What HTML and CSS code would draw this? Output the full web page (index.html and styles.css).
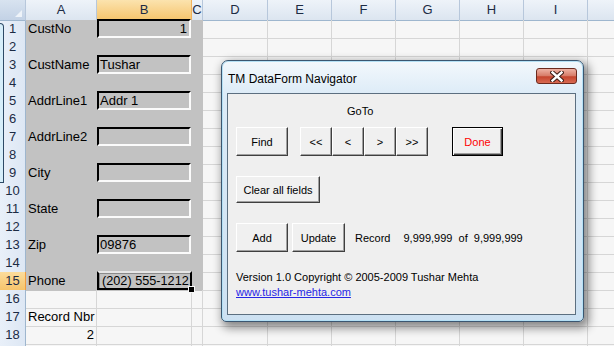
FILE: index.html
```html
<!DOCTYPE html>
<html lang="en">
<head>
    <meta charset="UTF-8">
    <title>TM DataForm Navigator</title>
    <link rel="stylesheet" href="styles.css">
</head>
<body>
    <div class="sheet">
        <div class="row head">
            <div class="corner"></div><div>A</div><div class="on">B</div><div>C</div><div>D</div><div>E</div><div>F</div><div>G</div><div>H</div><div>I</div><div></div>
        </div>
        <div class="row shade">
            <div class="rh">1</div><div class="c">CustNo</div><div class="c"><span class="box num">1</span></div><div class="c"></div>
            <div class="c"></div><div class="c"></div><div class="c"></div><div class="c"></div><div class="c"></div><div class="c"></div><div class="c"></div>
        </div>
        <div class="row shade">
            <div class="rh">2</div><div class="c"></div><div class="c"></div><div class="c"></div>
            <div class="c"></div><div class="c"></div><div class="c"></div><div class="c"></div><div class="c"></div><div class="c"></div><div class="c"></div>
        </div>
        <div class="row shade">
            <div class="rh">3</div><div class="c">CustName</div><div class="c"><span class="box">Tushar</span></div><div class="c"></div>
            <div class="c"></div><div class="c"></div><div class="c"></div><div class="c"></div><div class="c"></div><div class="c"></div><div class="c"></div>
        </div>
        <div class="row shade">
            <div class="rh">4</div><div class="c"></div><div class="c"></div><div class="c"></div>
            <div class="c"></div><div class="c"></div><div class="c"></div><div class="c"></div><div class="c"></div><div class="c"></div><div class="c"></div>
        </div>
        <div class="row shade">
            <div class="rh">5</div><div class="c">AddrLine1</div><div class="c"><span class="box">Addr 1</span></div><div class="c"></div>
            <div class="c"></div><div class="c"></div><div class="c"></div><div class="c"></div><div class="c"></div><div class="c"></div><div class="c"></div>
        </div>
        <div class="row shade">
            <div class="rh">6</div><div class="c"></div><div class="c"></div><div class="c"></div>
            <div class="c"></div><div class="c"></div><div class="c"></div><div class="c"></div><div class="c"></div><div class="c"></div><div class="c"></div>
        </div>
        <div class="row shade">
            <div class="rh">7</div><div class="c">AddrLine2</div><div class="c"><span class="box"></span></div><div class="c"></div>
            <div class="c"></div><div class="c"></div><div class="c"></div><div class="c"></div><div class="c"></div><div class="c"></div><div class="c"></div>
        </div>
        <div class="row shade">
            <div class="rh">8</div><div class="c"></div><div class="c"></div><div class="c"></div>
            <div class="c"></div><div class="c"></div><div class="c"></div><div class="c"></div><div class="c"></div><div class="c"></div><div class="c"></div>
        </div>
        <div class="row shade">
            <div class="rh">9</div><div class="c">City</div><div class="c"><span class="box"></span></div><div class="c"></div>
            <div class="c"></div><div class="c"></div><div class="c"></div><div class="c"></div><div class="c"></div><div class="c"></div><div class="c"></div>
        </div>
        <div class="row shade">
            <div class="rh">10</div><div class="c"></div><div class="c"></div><div class="c"></div>
            <div class="c"></div><div class="c"></div><div class="c"></div><div class="c"></div><div class="c"></div><div class="c"></div><div class="c"></div>
        </div>
        <div class="row shade">
            <div class="rh">11</div><div class="c">State</div><div class="c"><span class="box"></span></div><div class="c"></div>
            <div class="c"></div><div class="c"></div><div class="c"></div><div class="c"></div><div class="c"></div><div class="c"></div><div class="c"></div>
        </div>
        <div class="row shade">
            <div class="rh">12</div><div class="c"></div><div class="c"></div><div class="c"></div>
            <div class="c"></div><div class="c"></div><div class="c"></div><div class="c"></div><div class="c"></div><div class="c"></div><div class="c"></div>
        </div>
        <div class="row shade">
            <div class="rh">13</div><div class="c">Zip</div><div class="c"><span class="box">09876</span></div><div class="c"></div>
            <div class="c"></div><div class="c"></div><div class="c"></div><div class="c"></div><div class="c"></div><div class="c"></div><div class="c"></div>
        </div>
        <div class="row shade">
            <div class="rh">14</div><div class="c"></div><div class="c"></div><div class="c"></div>
            <div class="c"></div><div class="c"></div><div class="c"></div><div class="c"></div><div class="c"></div><div class="c"></div><div class="c"></div>
        </div>
        <div class="row shade">
            <div class="rh on">15</div><div class="c">Phone</div><div class="c active"><span class="box sel">(202) 555-1212</span><span class="handle"></span></div><div class="c"></div>
            <div class="c"></div><div class="c"></div><div class="c"></div><div class="c"></div><div class="c"></div><div class="c"></div><div class="c"></div>
        </div>
        <div class="row">
            <div class="rh">16</div><div class="c"></div><div class="c"></div><div class="c"></div>
            <div class="c"></div><div class="c"></div><div class="c"></div><div class="c"></div><div class="c"></div><div class="c"></div><div class="c"></div>
        </div>
        <div class="row">
            <div class="rh">17</div><div class="c">Record Nbr</div><div class="c"></div><div class="c"></div>
            <div class="c"></div><div class="c"></div><div class="c"></div><div class="c"></div><div class="c"></div><div class="c"></div><div class="c"></div>
        </div>
        <div class="row">
            <div class="rh">18</div><div class="c num">2</div><div class="c"></div><div class="c"></div>
            <div class="c"></div><div class="c"></div><div class="c"></div><div class="c"></div><div class="c"></div><div class="c"></div><div class="c"></div>
        </div>
        <div class="row">
            <div class="rh"></div><div class="c"></div><div class="c"></div><div class="c"></div>
            <div class="c"></div><div class="c"></div><div class="c"></div><div class="c"></div><div class="c"></div><div class="c"></div><div class="c"></div>
        </div>
    </div>

    <!-- borde de la otra ventana detras -->
    <div class="edge"></div>

    <div class="dialog">
        <div class="titlebar">
            <span class="title">TM DataForm Navigator</span>
            <span class="close">
                <svg width="14" height="11" viewBox="0 0 14 11">
                    <path d="M2.5 1.5 L11.5 9.5 M11.5 1.5 L2.5 9.5" stroke="#3a1a14" stroke-width="4.4" stroke-linecap="square"/>
                    <path d="M2.5 1.5 L11.5 9.5 M11.5 1.5 L2.5 9.5" stroke="#ffffff" stroke-width="2.4" stroke-linecap="square"/>
                </svg>
            </span>
        </div>
        <div class="client">
            <div class="goto">GoTo</div>
            <div class="line first">
                <button class="btn find">Find</button>
                <div class="nav">
                    <button class="btn">&lt;&lt;</button>
                    <button class="btn">&lt;</button>
                    <button class="btn">&gt;</button>
                    <button class="btn">&gt;&gt;</button>
                </div>
                <button class="btn done">Done</button>
            </div>
            <div class="line">
                <button class="btn clear">Clear all fields</button>
            </div>
            <div class="line">
                <button class="btn add">Add</button>
                <button class="btn update">Update</button>
                <span class="record">Record</span>
                <span class="count">9,999,999  of  9,999,999</span>
            </div>
            <p class="version">Version 1.0 Copyright © 2005-2009 Tushar Mehta</p>
            <a class="link" href="#">www.tushar-mehta.com</a>
        </div>
    </div>
</body>
</html>
```

FILE: styles.css
```css
body {
    margin: 0;
    overflow: hidden;
    background-color: #f6f6f6;
    font-family: "Liberation Sans", Arial, sans-serif;
}

/* hoja de calculo */
.sheet {
    width: 652px;
    font-size: 13px;
    color: #000000;
}
.row {
    display: grid;
    grid-template-columns: 26px 71px 95px 11px 65px 64px 64px 64px 64px 64px 64px;
    height: 18px;
}
.row > div {
    box-sizing: border-box;
    border-right: 1px solid #d6d6d6;
    border-bottom: 1px solid #d6d6d6;
    line-height: 18px;
    white-space: nowrap;
}
.c {
    padding: 0 2px;
}
.num {
    text-align: right;
}
.shade .c:nth-child(-n+4) {
    background-color: #c2c2c2;
    border-color: #c2c2c2;
}

.head {
    height: 20px;
}
.head > div {
    background: linear-gradient(#eef3f9, #dce5f0);
    border-right: 1px solid #b7c7db;
    border-bottom: 1px solid #9eb6ce;
    text-align: center;
    line-height: 20px;
    color: #1c2b44;
}
.head > div.on {
    background: linear-gradient(#fbe3ae, #f6c46c);
    border-bottom-color: #f29b3c;
    border-right-color: #f2b25c;
}
.head > div.corner {
    position: relative;
    background: linear-gradient(#d8e3f0, #c3d2e6);
}
.corner::after {
    content: "";
    position: absolute;
    right: 3px;
    bottom: 3px;
    border-left: 7px solid transparent;
    border-bottom: 7px solid #eef3f9;
}
.row > div.rh {
    background: linear-gradient(90deg, #e9f0f9, #dde7f4);
    border-right: 1px solid #9eb6ce;
    border-bottom: 1px solid #b3c6dc;
    text-align: center;
    color: #1c2b44;
}
.row > div.rh.on {
    background: linear-gradient(#fbdc9c, #f6c46c);
    border-right-color: #f29b3c;
    border-bottom-color: #f29b3c;
}

/* cajas de texto en la columna B */
.box {
    display: block;
    box-sizing: border-box;
    height: 19px;
    margin: -1px -2px 0;
    border: 2px solid;
    border-color: #000000 #fbfbfb #fbfbfb #000000;
    padding: 0 2px 0 1px;
    line-height: 16px;
}
.active {
    position: relative;
}
.box.sel {
    margin-right: -3px;
    border-color: #e6e6e6 #000000 #000000 #000000;
    box-shadow: inset 1px 1px #8a8a8a;
    padding-left: 3px;
    line-height: 16px;
    font-size: 12.7px;
}
.handle {
    position: absolute;
    right: -4px;
    bottom: -3px;
    width: 5px;
    height: 5px;
    background-color: #000000;
    border: 1px solid #f6f6f6;
}

.edge {
    position: absolute;
    left: 0;
    top: 23px;
    width: 3px;
    height: 158px;
    background-color: #d6eefa;
    border: 1px solid #2d4a66;
    border-left: none;
    border-radius: 0 4px 0 0;
}

/* ventana del formulario */
.dialog {
    position: absolute;
    left: 221px;
    top: 60px;
    width: 363px;
    height: 262px;
    box-sizing: border-box;
    border: 1px solid #3b5670;
    border-radius: 7px 7px 5px 5px;
    background: linear-gradient(#f3f8fc, #dcebf7 34px, #cde1f2);
    box-shadow: 3px 4px 10px 2px rgba(0, 0, 0, 0.45), inset 0 0 0 1px #b4e0f5;
    padding: 0 7px 6px 5px;
    display: flex;
    flex-direction: column;
    font-family: "Liberation Sans", Arial, sans-serif;
}
.titlebar {
    height: 32px;
    display: flex;
    justify-content: space-between;
    align-items: flex-start;
}
.title {
    margin-top: 11px;
    margin-left: 1px;
    font-size: 12px;
    line-height: 15px;
    color: #000000;
}
.close {
    margin-top: 7px;
    margin-right: -1px;
    width: 41px;
    height: 16px;
    box-sizing: border-box;
    border: 1px solid #6b2a1e;
    border-radius: 3px;
    background: linear-gradient(#eeb2a4, #d67a66 50%, #c5442d 55%, #d86a52);
    display: flex;
    align-items: center;
    justify-content: center;
}
.client {
    flex: 1;
    border: 1px solid #5c6f80;
    background-color: #efefef;
    padding: 10px 9px 0 8px;
    font-size: 11px;
    color: #000000;
}
.goto {
    margin-left: 111px;
    line-height: 14px;
}
.line {
    display: flex;
    align-items: center;
    margin-top: 20px;
}
.line.first {
    margin-top: 9px;
}
.btn {
    box-sizing: border-box;
    height: 29px;
    padding: 0;
    background-color: #f0f0f0;
    border: 1px solid;
    border-color: #ffffff #3f3f3f #3f3f3f #ffffff;
    box-shadow: inset -1px -1px #a0a0a0;
    font-family: "Liberation Sans", Arial, sans-serif;
    font-size: 11px;
    color: #000000;
}
.find {
    width: 52px;
    margin-right: 12px;
}
.nav {
    display: flex;
}
.nav .btn {
    width: 32px;
}
.done {
    width: 51px;
    margin-left: 24px;
    border-color: #000000;
    box-shadow: inset 1px 1px #ffffff, inset -1px -1px #3f3f3f, inset -2px -2px #a0a0a0;
    color: #ff0000;
}
.clear {
    width: 84px;
    height: 27px;
}
.add {
    width: 52px;
}
.update {
    width: 53px;
    margin-left: 4px;
}
.record {
    margin-left: 10px;
}
.count {
    margin-left: 13px;
    white-space: pre;
}
.version {
    margin: 18px 0 0;
    line-height: 15px;
}
.link {
    display: inline-block;
    line-height: 15px;
    color: #2626e6;
}
```
